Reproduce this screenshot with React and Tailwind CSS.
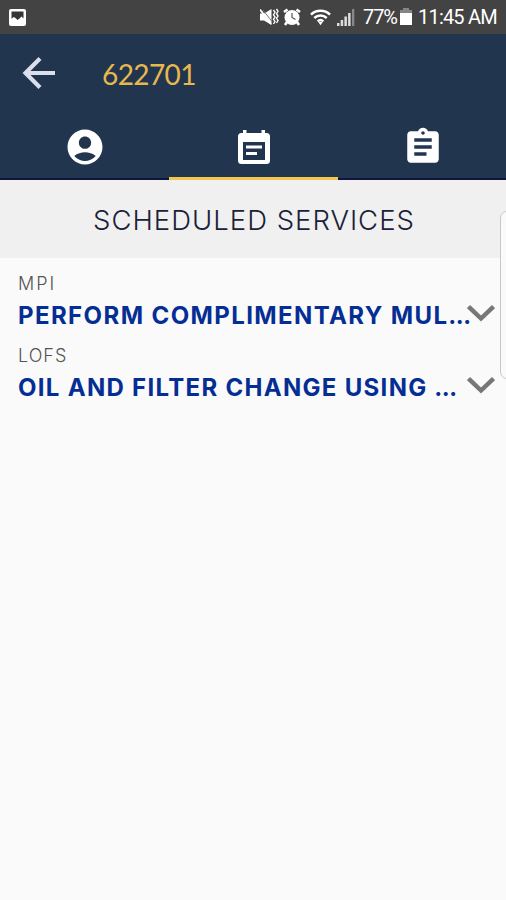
import { MdAccountCircle, MdAssignment } from 'react-icons/md';

const services = [
  { code: 'MPI', name: 'PERFORM COMPLIMENTARY MUL', codeSpacing: 'tracking-[2px]', spacing: 'tracking-[1.4px]' },
  { code: 'LOFS', name: 'OIL AND FILTER CHANGE USING ', codeSpacing: 'tracking-[1px]', spacing: 'tracking-[1.3px]' },
];

const StatusBar = () => (
  <div className="flex h-[34px] items-center bg-[#434343] text-white">
    <svg className="ml-[9px] h-[17px] w-[17px]" viewBox="0 0 17 17">
      <rect width="17" height="17" rx="2" fill="#fff" />
      <path d="M2.500 2.500h12v7l-2-2-2 2-2 1.500-2-2-2-1-2 2z" fill="#343434" />
    </svg>
    <svg className="ml-[234px] h-[18px] w-[19px]" viewBox="0 0 19 18" fill="none" stroke="#fff">
      <path d="M0 5.500h4L11.500 1v16L4 12.500H0z" fill="#fff" stroke="none" />
      <path d="M3 2l9 11.500" stroke="#777" strokeWidth="1" />
      <path d="M0 1.500l11 14.500" strokeWidth="1.800" />
      <path d="M13.500 2l1.500 2.300-1.500 2.400L15 9l-1.500 2.300 1.500 2.300-1.500 2.400M16.500 1L18 3.300l-1.500 2.400L18 8l-1.500 2.300L18 12.600 16.500 15" strokeWidth="1.400" />
    </svg>
    <svg className="ml-[4px] h-[18px] w-[18px]" viewBox="0 0 18 18" fill="none" stroke="#fff">
      <circle cx="9" cy="9.500" r="7.500" fill="#fff" stroke="none" />
      <path d="M1 4l3.500-2.500M17 4l-3.500-2.500M4 14l-2 3M14 14l2 3" strokeWidth="2.600" />
      <path d="M9 5v4.500l3.500 2" stroke="#555" strokeWidth="1.200" />
    </svg>
    <svg className="ml-[9px] h-[17px] w-[21px]" viewBox="0 0 22 17" fill="none" stroke="#fff" strokeWidth="2.600">
      <path d="M1 5.500a14.500 14.500 0 0 1 20 0M4.500 9a9.500 9.500 0 0 1 13 0M8 12.500a4.500 4.500 0 0 1 6 0" />
      <path d="M8.500 13h5L11 16.500z" fill="#fff" stroke="none" />
    </svg>
    <svg className="ml-[6px] h-[18px] w-[18px]" viewBox="0 0 18 18" fill="#ddd">
      <path d="M0 15h2.500v3H0zM3.700 12h2.500v6H3.700zM7.400 8.500h2.500V18H7.400zM11.100 5h2.500v13h-2.500z" />
      <path d="M15 1h2.300v17H15z" fill="#888" />
    </svg>
    <span className="ml-[8px] w-[35px] whitespace-nowrap text-[20px] leading-[36px] tracking-[-1.1px]">77%</span>
    <svg className="ml-[2px] h-[18px] w-[12px]" viewBox="0 0 12 18">
      <path d="M3 0h6v2h3v4H0V2h3z" fill="#858585" />
      <path d="M0 5h12v12H0z" fill="#fff" />
    </svg>
    <span className="ml-[6px] whitespace-nowrap text-[20px] leading-[36px] tracking-[-0.8px]">11:45 AM</span>
  </div>
);

const Header = () => (
  <header className="bg-[#22354f]">
    <div className="flex h-[80px] items-center">
      <svg className="ml-[22px] h-[34px] w-[34px]" viewBox="0 0 34 34" fill="none" stroke="#dadeed" strokeWidth="4.200">
        <path d="M33 16H4M18 1.500L3.500 16 18 30.500" />
      </svg>
      <h1 className="ml-[46px] text-[28px] tracking-[-0.6px] text-[#e8b84f]" style={{ fontFamily: 'Lato, sans-serif' }}>622701</h1>
    </div>
    <nav className="grid h-[66px] grid-cols-[169px_169px_168px]">
      <button className="flex justify-center border-b-2 border-[#11143f] pt-[12px]">
        <MdAccountCircle className="h-[42px] w-[42px] text-white" />
      </button>
      <button className="flex justify-center border-b-[3px] border-[#f3c653] pt-[16px] pl-px">
        <svg className="h-[34px] w-[32px]" viewBox="0 0 32 34">
          <path d="M5 0h3.500v3h15V0H27v3h1.500A3.500 3.500 0 0 1 32 6.500v24a3.500 3.500 0 0 1-3.500 3.500h-25A3.500 3.500 0 0 1 0 30.500v-24A3.500 3.500 0 0 1 3.500 3H5z" fill="#fff" />
          <path d="M5 12h22v18H5z" fill="#22354f" />
          <path d="M8 15.500h16v3H8zM8 22h11v3H8z" fill="#fff" />
        </svg>
      </button>
      <button className="flex justify-center border-b-2 border-[#11143f] pt-[12px] pl-px">
        <MdAssignment className="h-[42px] w-[42px] text-white" />
      </button>
    </nav>
  </header>
);

const ServiceRow = ({ code, name, codeSpacing, spacing }) => (
  <li className="h-[72px] pl-[18px]">
    <p className={`h-[33px] pt-[5px] text-[18px] leading-[24px] font-light text-[#555] ${codeSpacing}`}>{code}</p>
    <div className="flex h-[32px]">
      <p className={`w-[449px] whitespace-pre text-[24px] leading-[32px] font-bold text-[#052e94] ${spacing}`}>
        {name}<span className="text-[20px] font-black tracking-normal">…</span>
      </p>
      <svg className="mt-[4px] h-[18px] w-[28px] shrink-0" viewBox="0 0 28 18" fill="none" stroke="#777" strokeWidth="4.500">
        <path d="M1.500 2.500L14 14.500 26.500 2.500" />
      </svg>
    </div>
  </li>
);

export default function App() {
  return (
    <div className="relative h-[900px] w-[506px] overflow-hidden bg-[#fafafa] font-['Roboto',sans-serif]">
      <StatusBar />
      <Header />
      <main className="font-['Inter',sans-serif]">
        <h2 className="flex h-[78px] items-center justify-center bg-[#f0f0f0] pt-[4px] pl-[2px] text-[27.500px] font-light tracking-[1px] whitespace-nowrap text-[#1b2138]">SCHEDULED SERVICES</h2>
        <ul className="pt-[9px]">
          {services.map((service) => (
            <ServiceRow key={service.code} {...service} />
          ))}
        </ul>
      </main>
      {/* edge panel handle */}
      <div className="absolute top-[211px] left-[500px] h-[168px] w-[20px] rounded-[7px] border border-[#c8c8c8] bg-[#fafafa]" />
    </div>
  );
}
